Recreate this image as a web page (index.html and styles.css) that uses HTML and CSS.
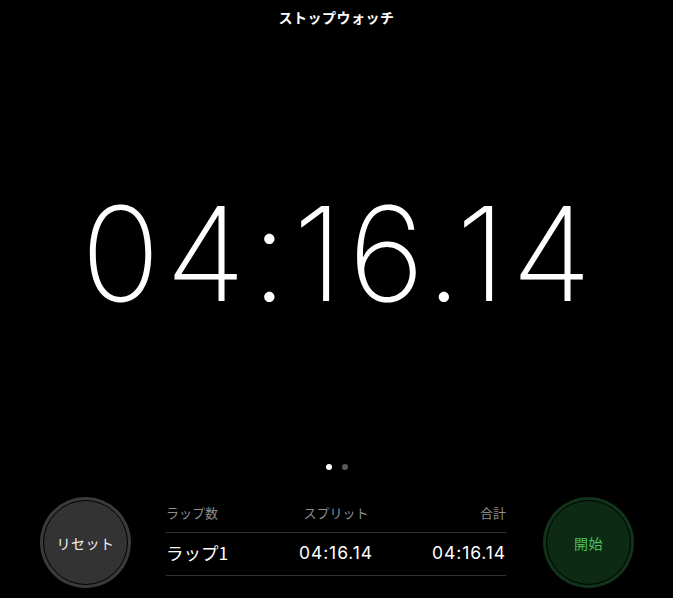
FILE: index.html
```html
<!DOCTYPE html>
<html lang="ja">
<head>
<meta charset="utf-8">
<link rel="stylesheet" href="styles.css">
</head>
<body>
<div class="app">
  <header class="title">ストップウォッチ</header>
  <div class="clock">04:16.14</div>
  <div class="dots"><span class="dot on"></span><span class="dot"></span></div>
  <div class="bottom">
    <button class="btn reset"><span class="btn-inner">リセット</span></button>
    <div class="laps">
      <div class="lap-head">
        <span class="c1">ラップ数</span>
        <span class="c2">スプリット</span>
        <span class="c3">合計</span>
      </div>
      <div class="lap-row">
        <span class="c1">ラップ1</span>
        <span class="c2 num">04:16.14</span>
        <span class="c3 num">04:16.14</span>
      </div>
    </div>
    <button class="btn start"><span class="btn-inner">開始</span></button>
  </div>
</div>
</body>
</html>
```

FILE: styles.css
```css
* { box-sizing: border-box; }
html, body { margin: 0; padding: 0; background: #000; }
body {
  width: 673px;
  height: 598px;
  overflow: hidden;
  font-family: "Noto Sans CJK JP", "Noto Sans", sans-serif;
  color: #fff;
}
.app {
  display: flex;
  flex-direction: column;
  height: 598px;
}
.title {
  height: 34px;
  padding-top: 7px;
  text-align: center;
  font-size: 14px;
  font-weight: 700;
  line-height: 20px;
  letter-spacing: 0.5px;
}
.clock {
  margin-top: 150px;
  height: 140px;
  text-align: center;
  font-family: "Inter", sans-serif;
  font-weight: 200;
  font-size: 131px;
  line-height: 140px;
  letter-spacing: 5.5px;
  padding-left: 5px;
}
.dots {
  margin-top: 140px;
  display: flex;
  justify-content: center;
  gap: 10px;
  height: 6px;
}
.dot {
  width: 6px;
  height: 6px;
  border-radius: 50%;
  background: #5a5a5a;
}
.dot.on { background: #fff; }
.bottom {
  margin-top: 27px;
  display: flex;
  align-items: flex-start;
  padding-left: 40px;
}
.btn {
  width: 91px;
  height: 91px;
  border-radius: 50%;
  padding: 3px;
  border: none;
  margin: 0;
  display: flex;
  font-family: "Noto Sans CJK JP", sans-serif;
}
.btn-inner {
  flex: 1;
  border-radius: 50%;
  display: flex;
  align-items: center;
  justify-content: center;
  font-size: 14px;
  letter-spacing: 0.5px;
}
.reset { background: #3a3a3a; }
.reset .btn-inner { background: #333333; color: #f2f2f2; border: 1.5px solid #000; }
.start { background: #10331a; margin-left: 37px; }
.start .btn-inner { background: #0c2a14; color: #4cc060; border: 1.5px solid #000; }
.laps {
  width: 340px;
  margin-left: 35px;
}
.lap-head, .lap-row {
  display: grid;
  grid-template-columns: 1fr 1fr 1fr;
  align-items: center;
  border-bottom: 1px solid #333;
}
.lap-head {
  height: 36px;
  font-size: 13px;
  color: #8e8e8e;
  padding-bottom: 5px;
}
.lap-row {
  height: 43px;
  font-size: 17.5px;
  color: #fff;
  padding-bottom: 4px;
}
.c1 { text-align: left; }
.c2 { text-align: center; }
.c3 { text-align: right; }
.num { font-family: "Inter", sans-serif; font-size: 17.5px; letter-spacing: 0.9px; }
```
